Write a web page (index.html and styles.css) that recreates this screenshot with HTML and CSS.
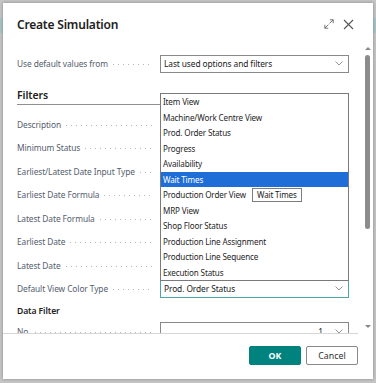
FILE: index.html
```html
<!DOCTYPE html>
<html>
<head>
    <title>Create Simulation</title>
    <link rel="stylesheet" href="styles.css">
</head>
<body>
    <div class="dialog">
        <div class="dlg-head">
            <h1>Create Simulation</h1>
            <div class="head-icons">
                <svg class="ico-expand" width="10" height="10" viewBox="0 0 10 10">
                    <path d="M5.8 0.8H9.2V4.2M9.2 0.8L5.6 4.4M0.8 5.8V9.2H4.2M0.8 9.2L4.4 5.6" fill="none" stroke="#666" stroke-width="0.9"/>
                </svg>
                <svg class="ico-close" width="11" height="11" viewBox="0 0 11 11">
                    <path d="M1 1L10 10M10 1L1 10" fill="none" stroke="#555" stroke-width="1.1"/>
                </svg>
            </div>
        </div>

        <div class="dlg-body">
            <div class="dlg-scroll">
                <div class="row">
                    <span class="lbl">Use default values from</span>
                    <div class="field">
                        <span class="val">Last used options and filters</span>
                        <svg class="chev" width="8" height="5" viewBox="0 0 8 5"><path d="M0.5 0.5L4 4L7.5 0.5" fill="none" stroke="#777" stroke-width="0.8"/></svg>
                    </div>
                </div>

                <h2 class="section">Filters</h2>

                <div class="row"><span class="lbl">Description</span><div class="field"></div></div>
                <div class="row"><span class="lbl">Minimum Status</span><div class="field"></div></div>
                <div class="row"><span class="lbl">Earliest/Latest Date Input Type</span><div class="field"></div></div>
                <div class="row"><span class="lbl">Earliest Date Formula</span><div class="field"></div></div>
                <div class="row"><span class="lbl">Latest Date Formula</span><div class="field"></div></div>
                <div class="row"><span class="lbl">Earliest Date</span><div class="field"></div></div>
                <div class="row"><span class="lbl">Latest Date</span><div class="field"></div></div>
                <div class="row">
                    <span class="lbl">Default View Color Type</span>
                    <div class="field focus">
                        <span class="val">Prod. Order Status</span>
                        <svg class="chev" width="8" height="5" viewBox="0 0 8 5"><path d="M0.5 0.5L4 4L7.5 0.5" fill="none" stroke="#777" stroke-width="0.8"/></svg>
                    </div>
                </div>

                <h3 class="subsection">Data Filter</h3>

                <div class="row">
                    <span class="lbl">No.</span>
                    <div class="field">
                        <span class="val num">1</span>
                        <svg class="chev" width="8" height="5" viewBox="0 0 8 5"><path d="M0.5 0.5L4 4L7.5 0.5" fill="none" stroke="#777" stroke-width="0.8"/></svg>
                    </div>
                </div>
            </div>

            <div class="scrollbar">
                <span class="sb-up"></span>
                <span class="sb-thumb"></span>
                <span class="sb-down"></span>
            </div>

            <ul class="dropdown">
                <li>Item View</li>
                <li>Machine/Work Centre View</li>
                <li>Prod. Order Status</li>
                <li>Progress</li>
                <li>Availability</li>
                <li class="sel">Wait Times</li>
                <li>Production Order View</li>
                <li>MRP View</li>
                <li>Shop Floor Status</li>
                <li>Production Line Assignment</li>
                <li>Production Line Sequence</li>
                <li>Execution Status</li>
            </ul>

            <div class="tip">Wait Times</div>
        </div>

        <div class="dlg-foot">
            <button class="btn btn-ok">OK</button>
            <button class="btn btn-cancel">Cancel</button>
        </div>
    </div>
</body>
</html>
```

FILE: styles.css
```css
* {
    box-sizing: border-box;
}

body {
    margin: 0;
    height: 383px;
    overflow: hidden;
    font-family: "Noto Sans", "Open Sans", sans-serif;
    color: #212121;
    background: linear-gradient(to bottom, #c4c4c4 18px, #a9c4c3 18px, #a9c4c3 33px, #c4c4c4 33px);
}

.dialog {
    margin: 3px 0 0 3px;
    width: 370px;
    height: 376px;
    background-color: #fff;
    display: flex;
    flex-direction: column;
    box-shadow: 0 0 3px rgba(0, 0, 0, 0.3);
}

/* header */
.dlg-head {
    height: 42px;
    flex-shrink: 0;
    display: flex;
    align-items: center;
    justify-content: space-between;
    padding: 0 19px 0 14px;
}

.dlg-head h1 {
    margin: 0;
    font-size: 12px;
    font-weight: 600;
    letter-spacing: -0.2px;
    color: #212121;
}

.head-icons {
    display: flex;
    align-items: center;
    gap: 9px;
}

/* body */
.dlg-body {
    position: relative;
    flex: 1;
    min-height: 0;
    display: flex;
}

.dlg-scroll {
    flex: 1;
    overflow: hidden;
    padding: 7px 14px 0 14px;
}

.row {
    display: flex;
    align-items: center;
    height: 23.5px;
}

.lbl {
    width: 143px;
    flex-shrink: 0;
    display: flex;
    align-items: center;
    padding-right: 7px;
    font-size: 8.4px;
    letter-spacing: -0.1px;
    color: #56606d;
    white-space: nowrap;
}

.lbl::after {
    content: "";
    flex: 1;
    height: 1px;
    margin: 2px 0 0 5px;
    background-image: linear-gradient(to right, #b5b5b5 1px, transparent 1px);
    background-size: 5px 1px;
}

.field {
    width: 189px;
    height: 18px;
    border: 1px solid #8a8886;
    display: flex;
    align-items: center;
    padding: 0 5px 0 3px;
    font-size: 8.4px;
    letter-spacing: -0.1px;
    color: #212121;
}

.field.focus {
    border-color: #4aa7a5;
}

.val {
    flex: 1;
    white-space: nowrap;
}

.val.num {
    text-align: right;
    padding-right: 12px;
}

.chev {
    flex-shrink: 0;
}

.section {
    margin: 11px 0 8px;
    padding-bottom: 1px;
    font-size: 10.5px;
    font-weight: 600;
    letter-spacing: -0.1px;
    line-height: 16px;
    border-bottom: 1px solid #8f8f8f;
}

.subsection {
    margin: 3.5px 0 1.5px;
    font-size: 8.6px;
    font-weight: 600;
    letter-spacing: -0.1px;
    line-height: 14px;
}

/* scrollbar */
.scrollbar {
    width: 10px;
    flex-shrink: 0;
    display: flex;
    flex-direction: column;
    align-items: center;
    padding-right: 1px;
}

.sb-up {
    margin-top: 2px;
    border-left: 3px solid transparent;
    border-right: 3px solid transparent;
    border-bottom: 3px solid #888;
}

.sb-thumb {
    margin-top: 5px;
    width: 5px;
    height: 174px;
    border-radius: 3px;
    background-color: #8c8c8c;
}

.sb-down {
    margin-top: auto;
    margin-bottom: 5px;
    border-left: 3px solid transparent;
    border-right: 3px solid transparent;
    border-top: 3px solid #888;
}

/* open dropdown list */
.dropdown {
    position: absolute;
    left: 157px;
    top: 48px;
    width: 189px;
    margin: 0;
    padding: 0;
    list-style: none;
    border: 1px solid #7a7a7a;
    background-color: #fff;
}

.dropdown li {
    height: 15.5px;
    line-height: 15.5px;
    padding-left: 2px;
    font-size: 8.1px;
    letter-spacing: -0.15px;
    color: #262626;
    white-space: nowrap;
}

.dropdown li.sel {
    background-color: #1f6dd6;
    color: #fff;
}

.tip {
    position: absolute;
    left: 249px;
    top: 143px;
    height: 14px;
    padding: 0 4px;
    border: 1px solid #7d7d7d;
    background-color: #fff;
    font-size: 8px;
    letter-spacing: -0.15px;
    line-height: 12px;
    color: #222;
}

/* footer */
.dlg-foot {
    height: 46px;
    flex-shrink: 0;
    margin-right: 15px;
    border-top: 1px solid #d6d6d6;
    display: flex;
    justify-content: flex-end;
    gap: 5px;
    padding-top: 12px;
}

.btn {
    width: 52px;
    height: 19px;
    border-radius: 2px;
    font-family: inherit;
    font-size: 8.8px;
    padding: 0;
    cursor: pointer;
}

.btn-ok {
    background-color: #00827f;
    border: 1px solid #00827f;
    color: #fff;
    font-weight: 700;
}

.btn-cancel {
    background-color: #fff;
    border: 1px solid #8a8886;
    color: #303030;
}
```
